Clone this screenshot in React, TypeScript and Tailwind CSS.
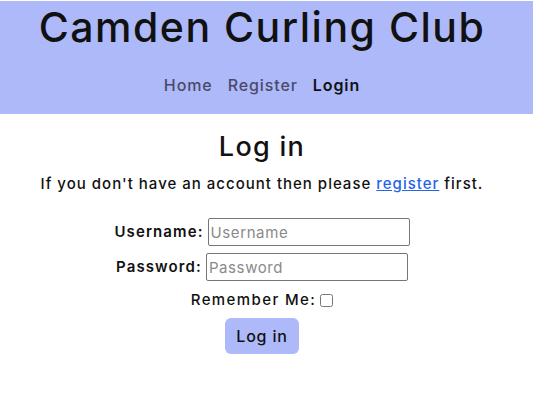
import React from "react";

export default function App() {
  return (
    <div className="min-h-[414px] bg-white pt-px" style={{ fontFamily: "Inter, 'Noto Sans', sans-serif" }}>
      <header className="bg-[#adb9f9] h-[113px] pr-[9px] flex flex-col items-center">
        <h1 className="text-[41px] leading-none font-medium text-[#111] mt-[6px] tracking-[1.5px]">Camden Curling Club</h1>
        <nav className="flex gap-[15px] mt-[29px] text-[16px] font-medium leading-none tracking-[0.9px]">
          <span className="text-[#4a4a68]">Home</span>
          <span className="text-[#4a4a68]">Register</span>
          <span className="text-[#111] font-semibold">Login</span>
        </nav>
      </header>
      <main className="pr-[9px] flex flex-col items-center text-[#111]">
        <h2 className="text-[27px] font-medium leading-none mt-[19px] tracking-[1.3px]">Log in</h2>
        <p className="text-[15px] font-medium mt-[16px] leading-none tracking-[1px]">
          If you don't have an account then please{" "}
          <a href="#" className="text-[#2563eb] underline">register</a> first.
        </p>
        <form className="flex flex-col items-center mt-[27px]">
          <div className="flex items-center gap-1">
            <label className="text-[15px] font-semibold tracking-[1.1px]">Username:</label>
            <input
              placeholder="Username"
              className="w-[202px] h-[28px] border border-[#767676] rounded-[2px] px-[2px] text-[15px] tracking-[0.6px] placeholder:text-[#8a8a8a]"
            />
          </div>
          <div className="flex items-center gap-1 mt-[7px]">
            <label className="text-[15px] font-semibold tracking-[1.1px]">Password:</label>
            <input
              type="password"
              placeholder="Password"
              className="w-[202px] h-[28px] border border-[#767676] rounded-[2px] px-[2px] text-[15px] tracking-[0.6px] placeholder:text-[#8a8a8a]"
            />
          </div>
          <div className="flex items-center gap-1 mt-[8px]">
            <label className="text-[15px] font-medium tracking-[1.4px]">Remember Me:</label>
            <input type="checkbox" className="w-[13px] h-[13px]" />
          </div>
          <button type="button" className="mt-[6px] bg-[#adb9f9] rounded-[6px] w-[74px] h-[36px] text-[16px] font-medium tracking-[0.8px]">
            Log in
          </button>
        </form>
      </main>
    </div>
  );
}
